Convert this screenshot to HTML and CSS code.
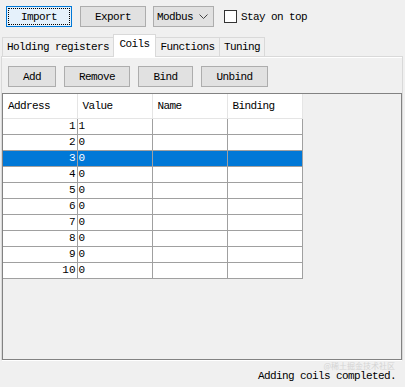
FILE: index.html
```html
<!DOCTYPE html>
<html lang="en">
  <head>
    <title>Coils</title>
    <link rel="stylesheet" href="styles.css">
  </head>
  <body>
    <div class="toolbar">
      <button class="btn btn-focus w66">Import</button>
      <button class="btn w66 ml8">Export</button>
      <div class="combo">
        <span>Modbus</span>
        <svg width="9" height="6" viewBox="0 0 9 6"><path d="M0.5 0.5 L4.5 4.5 L8.5 0.5" fill="none" stroke="#444" stroke-width="1"/></svg>
      </div>
      <label class="check"><span class="box"></span>Stay on top</label>
    </div>

    <div class="tabbar">
      <div class="tab t-holding">Holding registers</div>
      <div class="tab tab-active t-coils">Coils</div>
      <div class="tab t-functions">Functions</div>
      <div class="tab t-tuning">Tuning</div>
    </div>

    <div class="pane">
      <div class="actions">
        <button class="btn w48">Add</button>
        <button class="btn w66">Remove</button>
        <button class="btn w55">Bind</button>
        <button class="btn w67">Unbind</button>
      </div>

      <div class="view">
        <table class="grid">
          <colgroup><col class="c-first"><col><col><col></colgroup>
          <thead>
            <tr><th>Address</th><th>Value</th><th>Name</th><th>Binding</th></tr>
          </thead>
          <tbody id="rows"></tbody>
        </table>
      </div>
    </div>

    <div class="status">
      <span class="mark">@稀土掘金技术社区</span>
      <span>Adding coils completed.</span>
    </div>

    <script>
      var rows = document.getElementById("rows");
      var values = [1, 0, 0, 0, 0, 0, 0, 0, 0, 0];
      for (var i = 0; i < values.length; i++) {
        var tr = document.createElement("tr");
        if (i == 2) tr.className = "selected";
        tr.innerHTML = '<td class="addr">' + (i + 1) + '</td><td class="val">' + values[i] + '</td><td></td><td></td>';
        rows.appendChild(tr);
      }
    </script>
  </body>
</html>
```

FILE: styles.css
```css
body {
  margin: 0;
  width: 405px;
  height: 387px;
  background-color: #f0f0f0;
  font-family: "Liberation Mono", monospace;
  font-size: 11px;
  letter-spacing: -0.6px;
  color: #000;
  display: flex;
  flex-direction: column;
  overflow: hidden;
}

.toolbar {
  display: flex;
  align-items: center;
  padding: 6px 0 0 6px;
  height: 21px;
}

.btn {
  height: 21px;
  padding: 0;
  background-color: #e1e1e1;
  border: 1px solid #adadad;
  font: inherit;
  letter-spacing: inherit;
  color: #000;
}
.btn-focus {
  background-color: #e5f1fb;
  border-color: #0078d7;
  outline: 1px dotted #000;
  outline-offset: -3px;
}
.w48 { width: 48px; }
.w55 { width: 55px; }
.w66 { width: 66px; }
.w67 { width: 67px; }
.ml8 { margin-left: 8px; }

.combo {
  margin-left: 7px;
  width: 61px;
  height: 21px;
  box-sizing: border-box;
  border: 1px solid #adadad;
  background-color: #e1e1e1;
  display: flex;
  align-items: center;
  justify-content: space-between;
  padding: 0 5px 0 3px;
}

.check {
  margin-left: 10px;
  display: flex;
  align-items: center;
  gap: 4px;
}
.box {
  width: 11px;
  height: 11px;
  border: 1px solid #333;
  background-color: #fff;
}

.tabbar {
  display: flex;
  align-items: flex-end;
  margin-top: 7px;
  padding-left: 2px;
  height: 22px;
  position: relative;
  z-index: 1;
}
.tab {
  box-sizing: border-box;
  height: 19px;
  border: 1px solid #d9d9d9;
  border-bottom: none;
  border-left: none;
  background-color: #f0f0f0;
  text-align: center;
  line-height: 19px;
}
.t-holding { width: 112px; border-left: 1px solid #d9d9d9; }
.t-coils { width: 43px; }
.t-functions { width: 64px; }
.t-tuning { width: 45px; }
.tab-active {
  height: 23px;
  margin-bottom: -1px;
  background-color: #fff;
  border-left: 1px solid #d9d9d9;
  margin-left: -1px;
  line-height: 19px;
}

.pane {
  margin: 0 2px 0 1px;
  border: 1px solid #d9d9d9;
  border-bottom-color: #fff;
  background-color: #f0f0f0;
  box-shadow: inset 0 1px 0 #fff;
  padding: 9px 0 0 0;
  display: flex;
  flex-direction: column;
  gap: 6px;
}

.actions {
  display: flex;
  gap: 8px;
  padding-left: 6px;
}

.view {
  height: 265px;
  border: 1px solid #828282;
  background-color: #f0f0f0;
}

.grid {
  border-collapse: collapse;
  table-layout: fixed;
  width: 299px;
}
.grid col {
  width: 75px;
}
.grid col.c-first {
  width: 74px;
}
.grid th {
  height: 24px;
  padding: 0 0 0 5px;
  text-align: left;
  font-weight: normal;
  background-color: #fff;
  border-right: 1px solid #e5e5e5;
  border-bottom: 1px solid #e5e5e5;
}
.grid td {
  height: 15px;
  padding: 0;
  background-color: #fff;
  border-right: 1px solid #a0a0a0;
  border-bottom: 1px solid #a0a0a0;
  line-height: 15px;
  letter-spacing: 0;
}
.grid td.addr {
  text-align: right;
  padding-right: 1px;
}
.grid td.val {
  padding-left: 1px;
}
.grid tr.selected td {
  background-color: #0078d7;
  color: #fff;
}

.status {
  flex: 1;
  display: flex;
  align-items: center;
  justify-content: flex-end;
  padding: 4px 9px 0 0;
  position: relative;
}
.mark {
  position: absolute;
  right: 10px;
  top: 0;
  line-height: 9px;
  font-family: "Noto Sans CJK SC", sans-serif;
  font-size: 8px;
  letter-spacing: 0;
  color: #d4d4d4;
}
```
